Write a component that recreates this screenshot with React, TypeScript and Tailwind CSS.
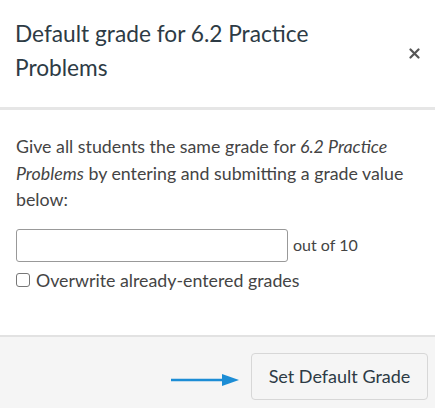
import React, { useState } from "react";

const App: React.FC = () => {
  const [grade, setGrade] = useState("");
  const [overwrite, setOverwrite] = useState(false);

  return (
    <div className="w-[435px] h-[408px] bg-white flex flex-col overflow-hidden font-['Lato','Liberation_Sans',sans-serif] text-[#2d3b45]">
      <div className="h-[110px] shrink-0 flex items-center justify-between pl-[15px] pr-[14px] border-b-[3px] border-[#e6e6e6]">
        <h2 className="text-[22.7px] leading-[34px] w-[340px] pb-[6px]">
          Default grade for 6.2 Practice Problems
        </h2>
        <button className="w-[14px] h-[14px] flex items-center justify-center text-[#555]" aria-label="Close">
          <svg width="11" height="11" viewBox="0 0 11 11">
            <path d="M1.5 1.5 L9.5 9.5 M9.5 1.5 L1.5 9.5" stroke="currentColor" strokeWidth="2.2" strokeLinecap="round" />
          </svg>
        </button>
      </div>

      <div className="flex-1 px-[16px] pt-[23px] text-[17.8px] text-[#444]">
        <p className="leading-[26.5px] w-[405px]">
          Give all students the same grade for <em>6.2 Practice Problems</em> by entering and submitting a grade value below:
        </p>
        <div className="flex items-center mt-[16px]">
          <input
            type="text"
            value={grade}
            onChange={(e) => setGrade(e.target.value)}
            className="w-[272px] h-[33px] border border-[#999] rounded-[3px] px-2 outline-none"
          />
          <span className="ml-[5px] text-[16px]">out of 10</span>
        </div>
        <label className="flex items-center mt-[8px] leading-[20px]">
          <input
            type="checkbox"
            checked={overwrite}
            onChange={(e) => setOverwrite(e.target.checked)}
            className="w-[14px] h-[14px] mr-[6px] appearance-none border border-[#777] rounded-[3px] bg-white"
          />
          Overwrite already-entered grades
        </label>
      </div>

      <div className="h-[73px] shrink-0 bg-[#f5f5f5] border-t-2 border-[#e2e2e2] flex items-start justify-end pt-[16px] pr-[7px]">
        <svg width="68" height="14" viewBox="0 0 68 14" className="mt-[20px] mr-[12px]">
          <line x1="0" y1="7" x2="54" y2="7" stroke="#1c8dd5" strokeWidth="2.5" />
          <polygon points="51,1 68,7 51,13" fill="#1c8dd5" />
        </svg>
        <button className="w-[177px] h-[47px] bg-[#f5f5f5] border border-[#d7d7d7] rounded-[4px] text-[18px] text-[#2d3b45]">
          Set Default Grade
        </button>
      </div>
    </div>
  );
};

export default App;
